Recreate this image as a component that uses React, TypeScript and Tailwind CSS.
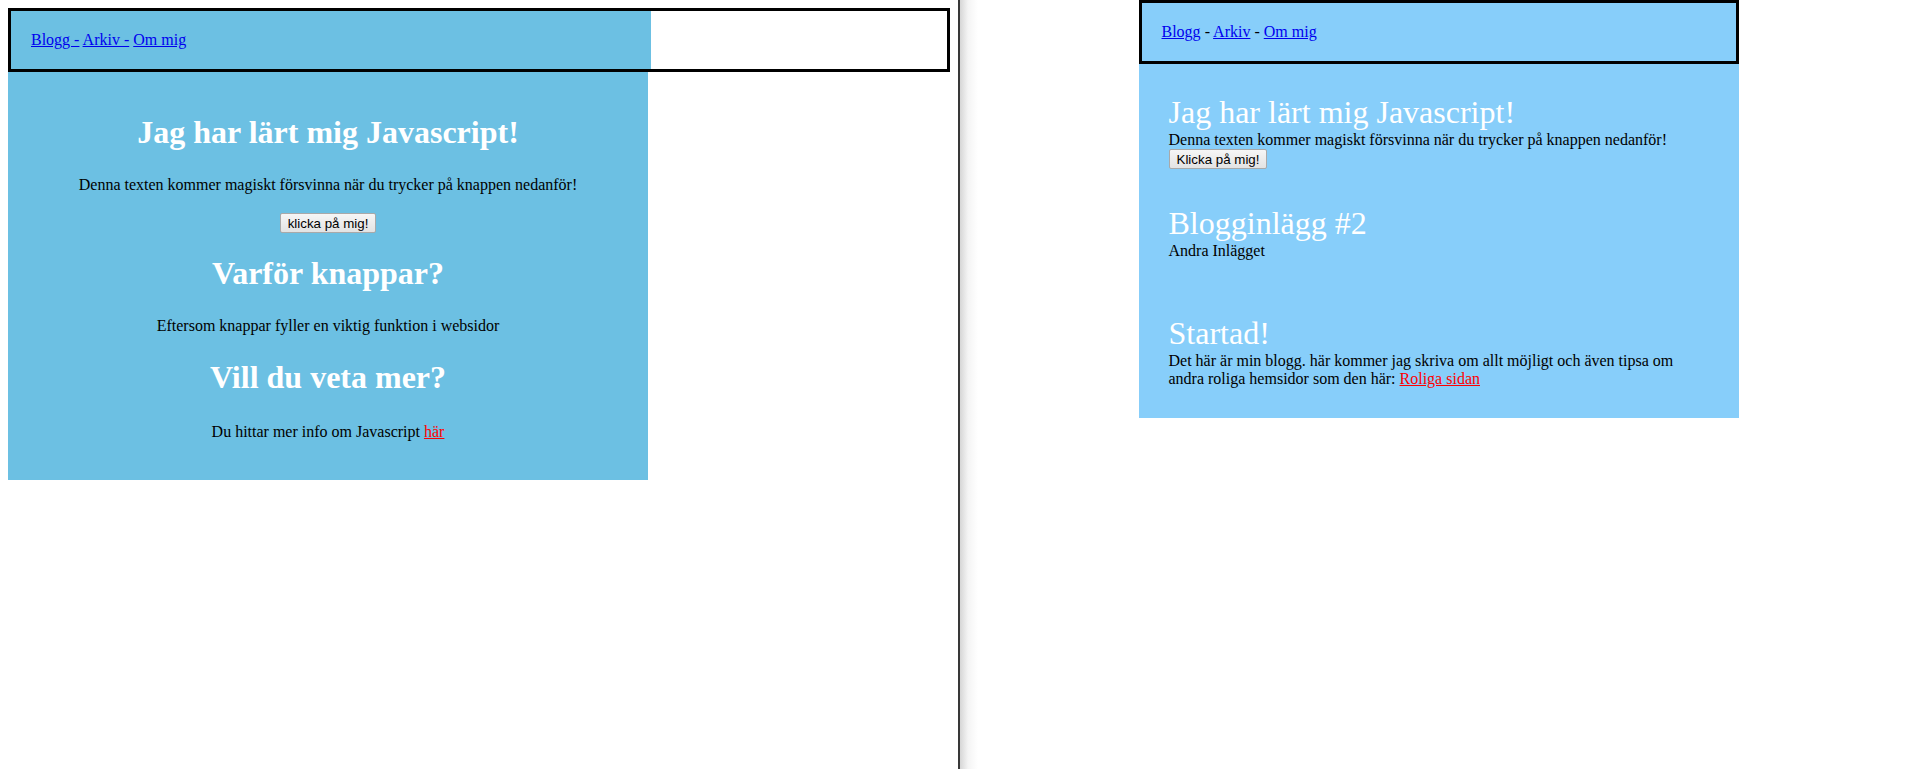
export default function App() {
  return (
    <div className="flex h-[769px] w-[1917px] overflow-hidden bg-white font-['Liberation_Serif','Times_New_Roman',serif] text-[16px] leading-[normal] text-black">
      {/* left window */}
      <div className="w-[958px] shrink-0 pl-[8px] pt-[8px]">
        <header className="h-[64px] w-[942px] border-[3px] border-black">
          <nav className="flex h-full w-[640px] items-center bg-[#6cc0e3] pl-[20px]">
            <span>
              <a href="#" className="text-[#0000ee] underline">Blogg -</a>{" "}
              <a href="#" className="text-[#0000ee] underline">Arkiv -</a>{" "}
              <a href="#" className="text-[#0000ee] underline">Om mig</a>
            </span>
          </nav>
        </header>
        <main className="w-[640px] bg-[#6cc0e3] pt-[42px] pb-[39px] text-center">
          <h1 className="text-[32px] font-bold text-white">Jag har lärt mig Javascript!</h1>
          <p className="mt-[25px]">Denna texten kommer magiskt försvinna när du trycker på knappen nedanför!</p>
          <div className="mt-[19px]">
            <button className="h-[20px] rounded-[2px] border border-[#a9a9a9] bg-gradient-to-b from-[#f6f6f6] to-[#e3e3e3] px-[7px] font-['Liberation_Sans',Arial,sans-serif] text-[13.333px] leading-[normal] text-black">
              klicka på mig!
            </button>
          </div>
          <h1 className="mt-[21.5px] text-[32px] font-bold text-white">Varför knappar?</h1>
          <p className="mt-[25.5px]">Eftersom knappar fyller en viktig funktion i websidor</p>
          <h1 className="mt-[24px] text-[32px] font-bold text-white">Vill du veta mer?</h1>
          <p className="mt-[26.5px]">
            Du hittar mer info om Javascript{" "}
            <a href="#" className="text-[#ff0000] underline">här</a>
          </p>
        </main>
      </div>

      {/* window divider */}
      <div className="w-[2px] shrink-0 bg-[#383838]" />

      {/* right window */}
      <div className="flex-1 bg-[linear-gradient(to_right,#d6d6d6,#f4f4f4_8px,#ffffff_18px)]">
        <div className="mx-auto w-[600px]">
          <header className="h-[64px] border-[3px] border-black bg-[#87cefa]">
            <nav className="flex h-full items-center pl-[20px]">
              <span>
                <a href="#" className="text-[#0000ee] underline">Blogg</a> -{" "}
                <a href="#" className="text-[#0000ee] underline">Arkiv</a> -{" "}
                <a href="#" className="text-[#0000ee] underline">Om mig</a>
              </span>
            </nav>
          </header>
          <main className="bg-[#87cefa] px-[30px] pt-[30px] pb-[30px]">
            <section>
              <h1 className="text-[32px] font-normal text-white">Jag har lärt mig Javascript!</h1>
              <div>Denna texten kommer magiskt försvinna när du trycker på knappen nedanför!</div>
              <button className="block h-[20px] rounded-[2px] border border-[#a9a9a9] bg-gradient-to-b from-[#f6f6f6] to-[#e3e3e3] px-[7px] font-['Liberation_Sans',Arial,sans-serif] text-[13.333px] leading-[normal] text-black">
                Klicka på mig!
              </button>
            </section>
            <section className="mt-[36px]">
              <h1 className="text-[32px] font-normal text-white">Blogginlägg #2</h1>
              <div>Andra Inlägget</div>
            </section>
            <section className="mt-[55px]">
              <h1 className="text-[32px] font-normal text-white">Startad!</h1>
              <div>
                Det här är min blogg. här kommer jag skriva om allt möjligt och även tipsa om andra roliga hemsidor som den här:{" "}
                <a href="#" className="text-[#ff0000] underline">Roliga sidan</a>
              </div>
            </section>
          </main>
        </div>
      </div>
    </div>
  );
}
